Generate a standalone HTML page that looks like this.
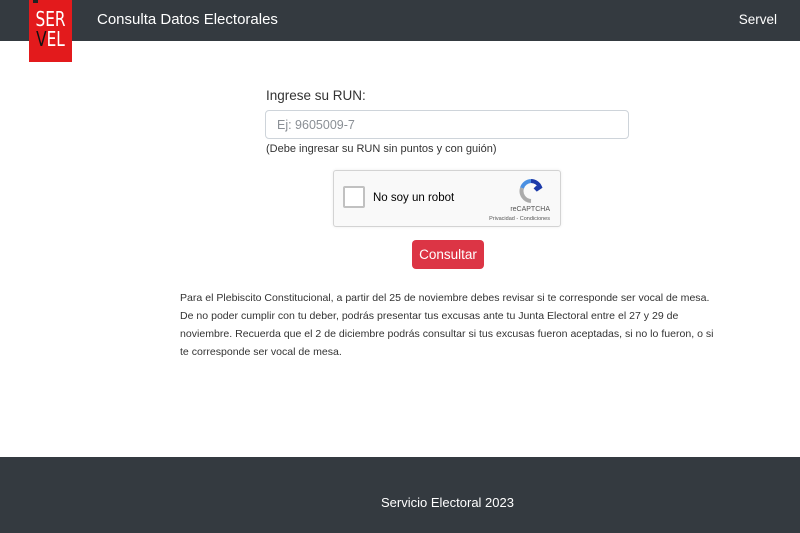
<!DOCTYPE html>
<html><head><meta charset="utf-8"><style>
*{margin:0;padding:0;box-sizing:border-box}
body{width:800px;height:533px;position:relative;background:#fff;font-family:"Liberation Sans",Arial,sans-serif;color:#212529;overflow:hidden}
.nav{position:absolute;left:0;top:0;width:800px;height:41px;background:#343a40}
.logo{position:absolute;left:29px;top:0;width:43px;height:62px;background:#e31a1c}
.logo div{color:#fff;font-size:20px;line-height:20px;text-align:center;padding-top:9px;font-family:"DejaVu Sans Condensed","Liberation Sans Narrow",sans-serif;transform:scaleX(.85)}
.logo:before{content:"";position:absolute;left:4px;top:0;width:5px;height:3px;background:#222}
.t{position:absolute;left:97px;top:11px;color:#fff;font-size:15px}
.s{position:absolute;right:23px;top:12px;color:#fff;font-size:13.5px}
.lbl{position:absolute;left:266px;top:88px;font-size:13.5px;color:#333}
.inp{position:absolute;left:265px;top:110px;width:364px;height:29px;border:1px solid #ced4da;border-radius:4px;font-size:12.5px;color:#8a8f95;padding:7px 11px}
.hint{position:absolute;left:266px;top:143px;font-size:11px;color:#333}
.cap{position:absolute;left:333px;top:170px;width:228px;height:57px;border:1px solid #d3d3d3;border-radius:3px;background:#f9f9f9;box-shadow:0 0 3px rgba(0,0,0,.08)}
.cb{position:absolute;left:9px;top:15px;width:22px;height:22px;border:2px solid #c1c1c1;border-radius:2px;background:#fff}
.cl{position:absolute;left:39px;top:21px;font-size:11.5px;color:#000}
.rc{position:absolute;right:10px;top:35px;font-size:7px;color:#555}
.rp{position:absolute;right:10px;top:45px;font-size:5.5px;color:#555}
.btn{position:absolute;left:412px;top:240px;width:72px;height:29px;background:#dc3545;border-radius:4px;color:#fff;font-size:13.5px;text-align:center;line-height:29px}
.p{position:absolute;left:180px;top:289px;width:600px;font-size:10.55px;line-height:18px;color:#333;white-space:nowrap}
.f{position:absolute;left:0;top:457px;width:800px;height:76px;background:#343a40;color:#fff;font-size:13px;text-align:center;padding-top:38px;padding-left:95px}
</style></head><body>
<div class="nav"><div class="t">Consulta Datos Electorales</div><div class="s">Servel</div></div>
<div class="logo"><div>SER<br><span style="color:#111">V</span>EL</div></div>
<div class="lbl">Ingrese su RUN:</div>
<div class="inp">Ej: 9605009-7</div>
<div class="hint">(Debe ingresar su RUN sin puntos y con guión)</div>
<div class="cap"><div class="cb"></div><div class="cl">No soy un robot</div>
<svg style="position:absolute;left:185px;top:8px" width="24" height="24" viewBox="0 0 24 24"><path d="M12 2a10 10 0 0 1 9 6l-3 2-2-2" fill="none" stroke="#1c3aa9" stroke-width="4"/><path d="M12 2A10 10 0 0 0 3 9" fill="none" stroke="#4a90e2" stroke-width="4"/><path d="M3 9a10 10 0 0 0 9 13" fill="none" stroke="#ababab" stroke-width="4"/></svg>
<div class="rc">reCAPTCHA</div><div class="rp">Privacidad - Condiciones</div></div>
<div class="btn">Consultar</div>
<div class="p">Para el Plebiscito Constitucional, a partir del 25 de noviembre debes revisar si te corresponde ser vocal de mesa.<br>De no poder cumplir con tu deber, podrás presentar tus excusas ante tu Junta Electoral entre el 27 y 29 de<br>noviembre. Recuerda que el 2 de diciembre podrás consultar si tus excusas fueron aceptadas, si no lo fueron, o si<br>te corresponde ser vocal de mesa.</div>
<div class="f">Servicio Electoral 2023</div>
</body></html>
